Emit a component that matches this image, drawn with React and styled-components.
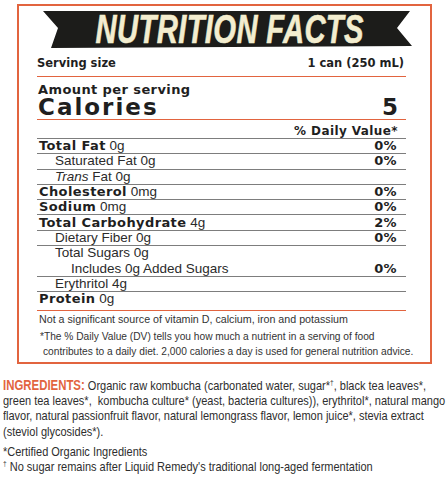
import styled, { createGlobalStyle } from 'styled-components';

const ORANGE = '#e2643f';
const INK = '#1f1f1f';

const GlobalStyle = createGlobalStyle`
  body {
    margin: 0;
    background: #ffffff;
    font-family: 'Liberation Sans', Arial, sans-serif;
    color: ${INK};
    overflow: hidden;
  }
`;

const nutrients = [
  { id: 1, name: 'Total Fat', amount: '0g', dv: '0%', bold: true },
  { id: 2, name: 'Saturated Fat', amount: '0g', dv: '0%', indent: 1 },
  { id: 3, name: 'Fat', italic: 'Trans', amount: '0g', indent: 1 },
  { id: 4, name: 'Cholesterol', amount: '0mg', dv: '0%', bold: true },
  { id: 5, name: 'Sodium', amount: '0mg', dv: '0%', bold: true },
  { id: 6, name: 'Total Carbohydrate', amount: '4g', dv: '2%', bold: true },
  { id: 7, name: 'Dietary Fiber', amount: '0g', dv: '0%', indent: 1 },
  { id: 8, name: 'Total Sugars', amount: '0g', indent: 1, noLine: true },
  { id: 9, name: 'Includes 0g Added Sugars', dv: '0%', indent: 2 },
  { id: 10, name: 'Erythritol', amount: '4g', indent: 1 },
  { id: 11, name: 'Protein', amount: '0g', bold: true, last: true },
];

const App = () => {
  return (
    <Page>
      <GlobalStyle />
      <Label>
        <Banner>
          <BannerText>NUTRITION FACTS</BannerText>
        </Banner>

        <ServingRow>
          <span>Serving size</span>
          <span>1 can (250 mL)</span>
        </ServingRow>

        <CaloriesBlock>
          <Amount>Amount per serving</Amount>
          <CaloriesRow>
            <span>Calories</span>
            <span>5</span>
          </CaloriesRow>
        </CaloriesBlock>

        <DvHeader>% Daily Value*</DvHeader>

        {nutrients.map((n) => (
          <NutrientRow key={n.id} $indent={n.indent || 0} $noLine={n.noLine} $last={n.last}>
            <NutrientName>
              {n.bold ? (
                <Strong>{n.name}</Strong>
              ) : (
                <>
                  {n.italic && <em>{n.italic} </em>}
                  {n.name}
                </>
              )}
              {n.amount && ` ${n.amount}`}
            </NutrientName>
            {n.dv && <Dv>{n.dv}</Dv>}
          </NutrientRow>
        ))}

        <Note>Not a significant source of vitamin D, calcium, iron and potassium</Note>
        <Footnote>
          *The % Daily Value (DV) tells you how much a nutrient in a serving of food
          <br />
          contributes to a daily diet. 2,000 calories a day is used for general nutrition advice.
        </Footnote>
      </Label>

      <Ingredients>
        <IngLine>
          <IngTitle>INGREDIENTS:</IngTitle> Organic raw kombucha (carbonated water, sugar*<sup>†</sup>, black tea leaves*,
        </IngLine>
        <IngLine>green tea leaves*,&nbsp; kombucha culture* (yeast, bacteria cultures)), erythritol*, natural mango</IngLine>
        <IngLine>flavor, natural passionfruit flavor, natural lemongrass flavor, lemon juice*, stevia extract</IngLine>
        <IngLine>(steviol glycosides*).</IngLine>
        <Legend>
          <IngLine>*Certified Organic Ingredients</IngLine>
          <IngLine><sup>†</sup> No sugar remains after Liquid Remedy's traditional long-aged fermentation</IngLine>
        </Legend>
      </Ingredients>
    </Page>
  );
};

export default App;

const Page = styled.div`
  width: 448px;
  padding-top: 4px;
  overflow: hidden;
`;

const Label = styled.div`
  margin: 0 16px 0 17px;
  border: 2px solid ${ORANGE};
  padding: 5px 24px 2px 18px;
`;

const Banner = styled.div`
  height: 37px;
  margin: 0 -7px 0 6px;
  background: #1c1c1a;
  clip-path: polygon(0 0, 367px 0, 354px 17px, 369px 35px, 8px 37px, 15px 17px);
  display: flex;
  align-items: center;
  justify-content: center;
`;

const BannerText = styled.span`
  display: inline-block;
  font-family: 'Liberation Sans', Arial, sans-serif;
  font-size: 40px;
  line-height: 37px;
  font-weight: 700;
  font-style: italic;
  color: #f3edcf;
  white-space: nowrap;
  letter-spacing: 0.5px;
  transform: scaleX(0.73);
  margin-left: 4px;
  -webkit-text-stroke: 0.6px #f3edcf;
`;

const BoldText = `
  font-family: 'DejaVu Sans', Verdana, sans-serif;
  font-weight: 700;
`;

const ServingRow = styled.div`
  ${BoldText};
  display: flex;
  justify-content: space-between;
  font-size: 11.5px;
  line-height: 14px;
  padding: 8px 2px 6px 0;
  border-bottom: 1.5px solid ${ORANGE};
`;

const CaloriesBlock = styled.div`
  ${BoldText};
  padding: 6px 0 0 1px;
  border-bottom: 1.5px solid ${ORANGE};
`;

const Amount = styled.div`
  font-size: 13px;
  line-height: 13px;
  letter-spacing: 0.4px;
`;

const CaloriesRow = styled.div`
  display: flex;
  justify-content: space-between;
  font-size: 23px;
  line-height: 23px;
  letter-spacing: 2px;
  padding-right: 6px;
`;

const DvHeader = styled.div`
  ${BoldText};
  font-size: 12px;
  line-height: 14px;
  letter-spacing: 0.4px;
  text-align: right;
  padding: 4px 8px 0 0;
  border-bottom: 1px solid #7d7d7d;
`;

const NutrientRow = styled.div`
  display: flex;
  justify-content: space-between;
  align-items: center;
  height: 14.3px;
  padding-left: ${(p) => 2 + p.$indent * 16}px;
  padding-right: 9px;
  padding-bottom: ${(p) => (p.$last ? 4 : 0)}px;
  border-bottom: ${(p) =>
    p.$last ? `1.5px solid ${ORANGE}` : p.$noLine ? '1px solid transparent' : '1px solid #7d7d7d'};
`;

const NutrientName = styled.span`
  font-size: 13.5px;
  line-height: 14px;
  color: #2b2b2b;
  white-space: nowrap;

  em {
    font-style: italic;
  }
`;

const Strong = styled.span`
  ${BoldText};
  font-size: 13px;
  letter-spacing: 0.4px;
  color: ${INK};
`;

const Dv = styled.span`
  ${BoldText};
  font-size: 13px;
  line-height: 14px;
  letter-spacing: 0.4px;
`;

const Note = styled.div`
  font-size: 10.7px;
  line-height: 13px;
  color: #333;
  padding: 2px 0 0 2px;
`;

const Footnote = styled.div`
  font-size: 10.2px;
  line-height: 14.7px;
  color: #333;
  margin-top: 4px;
  padding-left: 6px;
  text-indent: -3px;
  white-space: nowrap;
`;

const Ingredients = styled.div`
  width: 545px;
  margin: 14px 0 0 3px;
  font-family: 'Liberation Sans', Arial, sans-serif;
  font-size: 13.5px;
  line-height: 15.3px;
  color: #2e2e2e;
  transform: scaleX(0.815);
  transform-origin: left top;

  sup {
    font-size: 8px;
    line-height: 0;
    vertical-align: 5px;
  }
`;

const IngLine = styled.div`
  white-space: nowrap;
`;

const IngTitle = styled.span`
  color: ${ORANGE};
  font-weight: 700;
  font-size: 14px;
`;

const Legend = styled.div`
  margin-top: 5px;
`;
